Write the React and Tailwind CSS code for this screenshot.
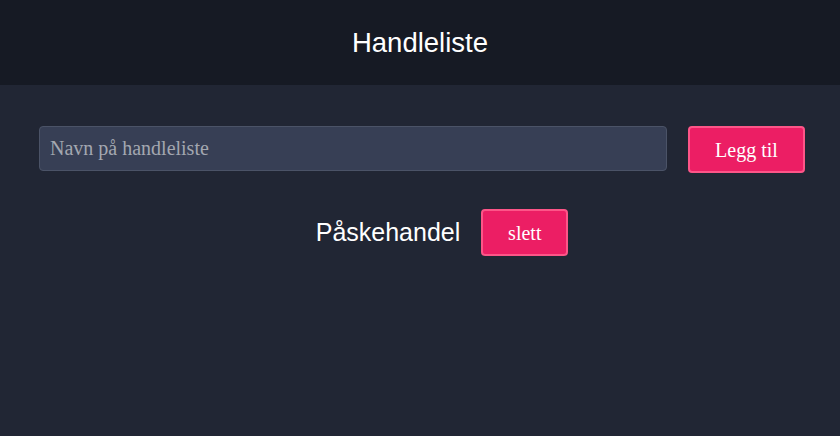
export default function App() {
  return (
    <div className="min-h-[436px] bg-[#212634] font-['Liberation_Sans',Arial,sans-serif]">
      {/* Topplinje */}
      <header className="h-[85px] bg-[#161a24] flex items-center justify-center">
        <h1 className="text-[27.5px] text-white">Handleliste</h1>
      </header>

      <main className="pl-[39px] pr-[35px] pt-[41px]">
        <form className="flex items-start gap-[21px]" onSubmit={(e) => e.preventDefault()}>
          <input
            type="text"
            placeholder="Navn på handleliste"
            className="flex-1 h-[45px] px-[10px] bg-[#373f55] border border-[#4b5367] rounded-[4px] text-[20px] text-white placeholder:text-[#a3a7b0] font-['Liberation_Serif','Times_New_Roman',serif] outline-none"
          />
          <button
            type="submit"
            className="w-[117px] h-[47px] bg-[#ec1e64] border-2 border-[#fd5588] rounded-[4px] text-white text-[20px] font-['Liberation_Serif','Times_New_Roman',serif]"
          >
            Legg til
          </button>
        </form>

        <ul className="mt-[36px] pl-[40px]">
          <li className="flex items-center justify-center gap-[21px]">
            <span className="text-[25px] text-white">Påskehandel</span>
            <button className="w-[87px] h-[47px] bg-[#ec1e64] border-2 border-[#fd5588] rounded-[4px] text-white text-[20px] font-['Liberation_Serif','Times_New_Roman',serif]">
              slett
            </button>
          </li>
        </ul>
      </main>
    </div>
  );
}
